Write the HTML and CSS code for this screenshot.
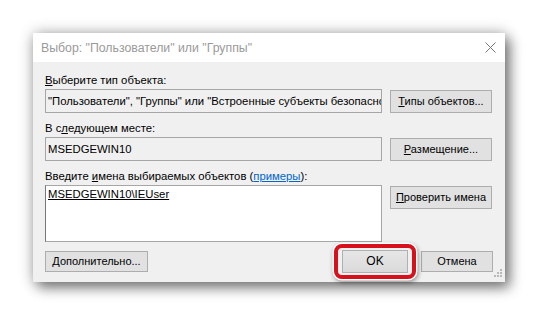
FILE: index.html
```html
<!DOCTYPE html>
<html lang="ru">
<head>
<meta charset="utf-8">
<link rel="stylesheet" href="styles.css">
</head>
<body>
<div class="dialog">
  <div class="titlebar">
    <span class="title">Выбор: "Пользователи" или "Группы"</span>
    <svg class="close" width="11" height="11" viewBox="0 0 11 11"><path d="M0.5 0.5L10.5 10.5M10.5 0.5L0.5 10.5" stroke="#777" stroke-width="1" fill="none"/></svg>
  </div>
  <div class="content">
    <div class="label"><u>В</u>ыберите тип объекта:</div>
    <div class="row">
      <div class="field"><span class="clip">"Пользователи", "Группы" или "Встроенные субъекты безопасности"</span></div>
      <div class="btn"><u>Т</u>ипы объектов...</div>
    </div>
    <div class="label">В с<u>л</u>едующем месте:</div>
    <div class="row">
      <div class="field">MSEDGEWIN10</div>
      <div class="btn"><u>Р</u>азмещение...</div>
    </div>
    <div class="label">Введите <u>и</u>мена выбираемых объектов (<a class="link">примеры</a>):</div>
    <div class="row top">
      <div class="area"><u>MSEDGEWIN10\IEUser</u></div>
      <div class="btn"><u>П</u>роверить имена</div>
    </div>
    <div class="footer">
      <div class="btn wide"><u>Д</u>ополнительно...</div>
      <div class="actions">
        <div class="okwrap"><div class="btn ok">OK</div></div>
        <div class="btn cancel">Отмена</div>
      </div>
    </div>
    <svg class="grip" width="12" height="12" viewBox="0 0 12 12">
      <g fill="#b8b8b8">
        <rect x="9" y="1" width="2" height="2"/>
        <rect x="6" y="4" width="2" height="2"/><rect x="9" y="4" width="2" height="2"/>
        <rect x="3" y="7" width="2" height="2"/><rect x="6" y="7" width="2" height="2"/><rect x="9" y="7" width="2" height="2"/>
      </g>
    </svg>
  </div>
</div>
</body>
</html>
```

FILE: styles.css
```css
html, body {
  margin: 0;
  padding: 0;
  background: #ffffff;
}
body {
  width: 538px;
  height: 316px;
  overflow: hidden;
  font-family: "Liberation Sans", Arial, sans-serif;
  font-size: 11px;
  color: #000;
}
.dialog {
  margin: 33px 0 0 33px;
  width: 472px;
  height: 249px;
  background: #f0f0f0;
  box-shadow: 0 0 14px rgba(0,0,0,0.28), 5px 6px 12px rgba(0,0,0,0.45);
  display: flex;
  flex-direction: column;
}
.titlebar {
  height: 29px;
  background: #fff;
  display: flex;
  align-items: center;
  justify-content: space-between;
  padding: 0 9px 0 8px;
}
.title {
  font-size: 12.3px;
  color: #9a9a9a;
}
.close {
  display: block;
}
.content {
  position: relative;
  flex: 1;
  padding: 11px 12px 0 12px;
  display: flex;
  flex-direction: column;
}
.label {
  height: 15px;
  line-height: 15px;
  margin-bottom: 1px;
  font-size: 11.3px;
}
.link {
  color: #0066cc;
  text-decoration: underline;
}
.row {
  display: flex;
  gap: 8px;
  align-items: flex-start;
  margin-bottom: 8px;
}
.field {
  width: 337px;
  height: 24px;
  box-sizing: border-box;
  border: 1px solid #a6a6a6;
  background: #f0f0f0;
  line-height: 22px;
  padding: 0 2px;
  overflow: hidden;
  white-space: nowrap;
  font-size: 11.3px;
}
.area {
  width: 337px;
  height: 57px;
  box-sizing: border-box;
  border: 1px solid #a6a6a6;
  border-left-color: #777;
  background: #fff;
  padding: 0 2px;
  line-height: 16px;
  font-size: 11.3px;
}
.btn {
  width: 102px;
  height: 23px;
  box-sizing: border-box;
  border: 1px solid #adadad;
  background: #e1e1e1;
  text-align: center;
  line-height: 21px;
  white-space: nowrap;
  margin-top: 1px;
}
.footer {
  margin-top: 0;
  display: flex;
  justify-content: space-between;
  align-items: center;
}
.btn.wide {
  width: 103px;
  height: 21px;
  line-height: 19px;
  margin: 0;
}
.actions {
  display: flex;
  align-items: center;
  gap: 13px;
}
.okwrap {
  position: relative;
}
.btn.ok {
  width: 66px;
  height: 23px;
  line-height: 21px;
  margin: 0;
  font-size: 12px;
  background: linear-gradient(#e6e6e6, #dadada);
  border-color: #b0b0b0;
}
.okwrap::before {
  content: "";
  position: absolute;
  left: -8px;
  top: -6px;
  right: -8px;
  bottom: -6px;
  border: 4px solid #d7101b;
  border-radius: 8px;
  box-shadow: 0 0 0 1.5px #fff, 1px 2px 5px 1px rgba(0,0,0,0.45);
}
.btn.cancel {
  width: 72px;
  height: 21px;
  line-height: 19px;
  margin: 0;
}
.grip {
  position: absolute;
  right: 2px;
  bottom: 2px;
}
```
